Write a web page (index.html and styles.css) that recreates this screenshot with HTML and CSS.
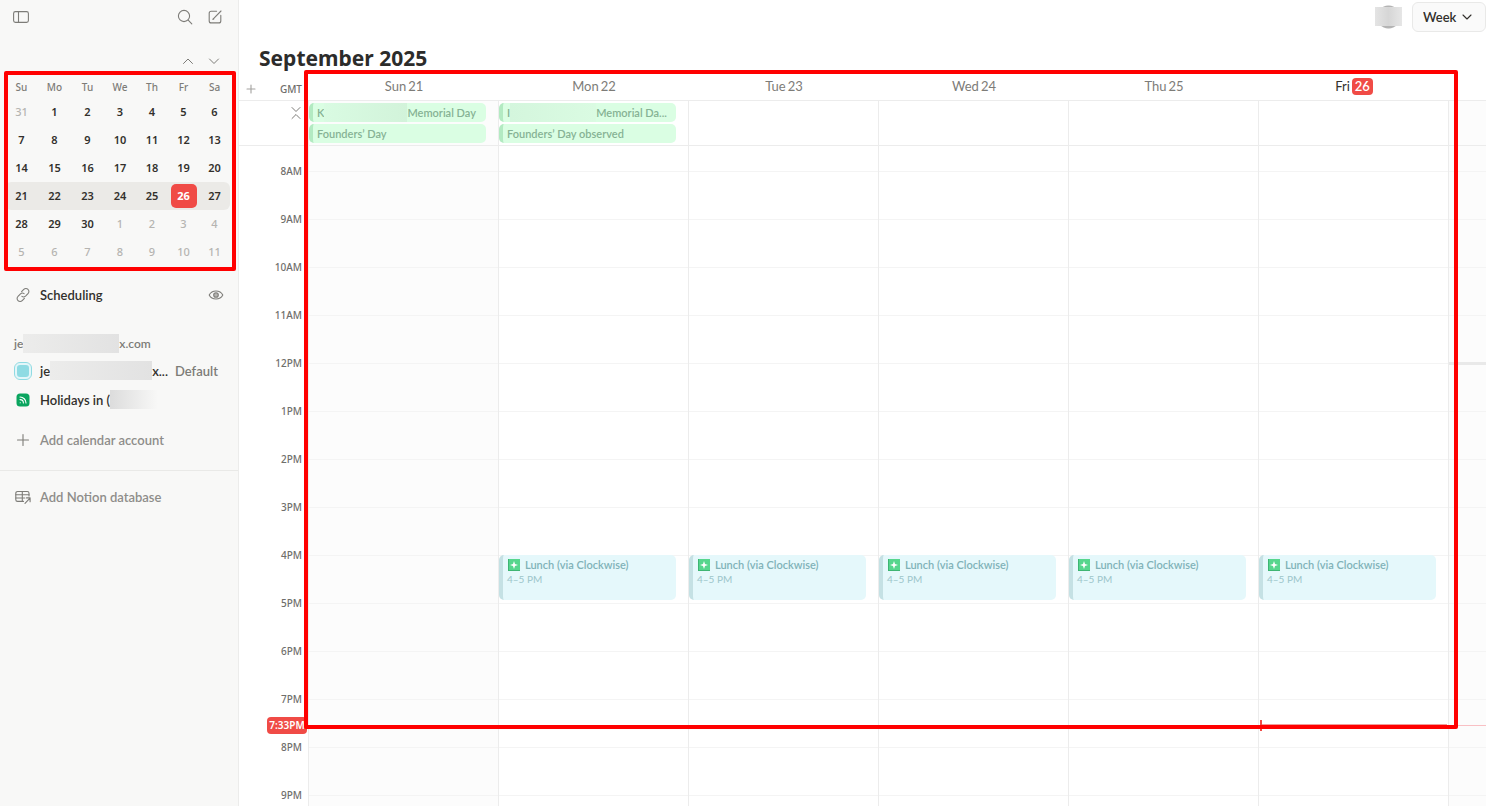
FILE: index.html
```html
<!DOCTYPE html>
<html lang="en">
<head>
    <meta charset="UTF-8">
    <meta name="viewport" content="width=device-width, initial-scale=1.0">
    <title>September 2025</title>
    <link rel="stylesheet" href="styles.css">
</head>
<body>
    <aside class="sidebar">
        <div class="sidebar-toolbar">
            <button class="icon-btn" aria-label="Toggle sidebar">
                <svg width="16" height="16" viewBox="0 0 16 16"><rect x="0.6" y="2.6" width="14.8" height="10.8" rx="1.8"/><path d="M5.5 2.6v10.8"/></svg>
            </button>
            <button class="icon-btn push" aria-label="Search">
                <svg width="16" height="16" viewBox="0 0 16 16"><circle cx="7" cy="7" r="5.6"/><path d="M11.2 11.2l3.6 3.6"/></svg>
            </button>
            <button class="icon-btn" aria-label="New event">
                <svg width="16" height="16" viewBox="0 0 16 16"><path d="M9.6 2.3H4.2a2 2 0 0 0-2 2v7.6a2 2 0 0 0 2 2h7.6a2 2 0 0 0 2-2V6.4"/><path d="M6.3 9.8L14 2"/><path d="M5.8 10.3l1-.3"/></svg>
            </button>
        </div>
        <div class="month-nav">
            <button class="icon-btn" aria-label="Previous month">
                <svg width="12" height="12" viewBox="0 0 12 12"><path d="M1.5 8.5L6 4l4.5 4.5"/></svg>
            </button>
            <button class="icon-btn" aria-label="Next month">
                <svg width="12" height="12" viewBox="0 0 12 12"><path d="M1.5 4L6 8.500 10.500 4"/></svg>
            </button>
        </div>

        <div class="mini">
            <table class="mini-calendar">
                <colgroup>
                    <col class="wide"><col class="wide"><col class="wide"><col class="mid"><col class="mid"><col><col>
                </colgroup>
                <thead>
                    <tr><th>Su</th><th>Mo</th><th>Tu</th><th>We</th><th>Th</th><th>Fr</th><th>Sa</th></tr>
                </thead>
                <tbody>
                    <tr><td class="other">31</td><td>1</td><td>2</td><td>3</td><td>4</td><td>5</td><td>6</td></tr>
                    <tr><td>7</td><td>8</td><td>9</td><td>10</td><td>11</td><td>12</td><td>13</td></tr>
                    <tr><td>14</td><td>15</td><td>16</td><td>17</td><td>18</td><td>19</td><td>20</td></tr>
                    <tr class="current"><td>21</td><td>22</td><td>23</td><td>24</td><td>25</td><td><span class="mini-today">26</span></td><td>27</td></tr>
                    <tr><td>28</td><td>29</td><td>30</td><td class="other">1</td><td class="other">2</td><td class="other">3</td><td class="other">4</td></tr>
                    <tr><td class="other">5</td><td class="other">6</td><td class="other">7</td><td class="other">8</td><td class="other">9</td><td class="other">10</td><td class="other">11</td></tr>
                </tbody>
            </table>
            <div class="frame"></div>
        </div>

        <div class="side-row scheduling">
            <svg class="side-icon" width="16" height="16" viewBox="0 0 16 16"><path d="M6.6 4.7l2.2-2.3a2.9 2.9 0 0 1 4.2 0 2.9 2.9 0 0 1 0 4.2l-2.5 2.5a2.9 2.9 0 0 1-3.6.3"/><path d="M9.4 11.3l-2.2 2.3a2.9 2.9 0 0 1-4.2 0 2.9 2.9 0 0 1 0-4.2l2.5-2.5a2.9 2.9 0 0 1 3.6-.3"/></svg>
            <span>Scheduling</span>
            <button class="icon-btn push" aria-label="Show scheduling">
                <svg width="16" height="16" viewBox="0 0 16 16"><path d="M1.2 8C4 2.600 12 2.600 14.800 8 12 13.400 4 13.400 1.200 8z"/><circle cx="8" cy="8" r="2.3" class="pupil"/></svg>
            </button>
        </div>

        <div class="account">
            <span>je</span><span class="blank blank-mail"></span><span>x.com</span>
        </div>
        <div class="side-row">
            <span class="side-icon calendar-color"></span>
            <span>je</span><span class="blank blank-name"></span><span>x...</span>
            <span class="default">Default</span>
        </div>
        <div class="side-row holidays">
            <svg class="side-icon" width="16" height="16" viewBox="0 0 16 16"><rect class="feed" x="1.5" y="1.5" width="13" height="13" rx="3.5"/><g class="feed-lines"><path d="M5 5a6 6 0 0 1 6 6"/><path d="M5 7.600a3.400 3.400 0 0 1 3.400 3.400"/><path d="M5.2 10.800h.1"/></g></svg>
            <span>Holidays in (</span><span class="blank blank-place"></span>
        </div>
        <button class="side-row add-account">
            <svg class="side-icon" width="16" height="16" viewBox="0 0 16 16"><path d="M8 2.5v11M2.5 8h11"/></svg>
            <span>Add calendar account</span>
        </button>
        <button class="side-row add-database">
            <svg class="side-icon" width="16" height="16" viewBox="0 0 16 16"><path d="M8.5 12.4H2.5a1.7 1.7 0 0 1-1.7-1.7V4.2a1.7 1.7 0 0 1 1.7-1.7h9.8A1.7 1.7 0 0 1 14 4.2V7"/><path d="M.8 5.7H14M.8 9h9M7.3 2.5v9.9"/><path d="M10 14.3l5-5.2M11.5 8.9h3.6v3.8"/></svg>
            <span>Add Notion database</span>
        </button>
    </aside>

    <main class="main">
        <header class="topbar">
            <span class="avatar"></span>
            <div class="view-picker">
                <select aria-label="View">
                    <option>Week</option>
                    <option>Day</option>
                    <option>Month</option>
                </select>
                <svg width="12" height="12" viewBox="0 0 12 12"><path d="M2 4l4 4 4-4"/></svg>
            </div>
        </header>
        <h1>September 2025</h1>

        <section class="board">
            <div class="board-row days">
                <div class="zone">
                    <button class="icon-btn" aria-label="Add time zone">
                        <svg width="10" height="10" viewBox="0 0 10 10"><path d="M5 1v8M1 5h8"/></svg>
                    </button>
                    <span>GMT</span>
                </div>
                <div class="day-name"><span>Sun</span> <span>21</span></div>
                <div class="day-name"><span>Mon</span> <span>22</span></div>
                <div class="day-name"><span>Tue</span> <span>23</span></div>
                <div class="day-name"><span>Wed</span> <span>24</span></div>
                <div class="day-name"><span>Thu</span> <span>25</span></div>
                <div class="day-name today"><span>Fri</span> <span class="today-number">26</span></div>
                <div></div>
            </div>

            <div class="board-row all-day">
                <div class="collapse">
                    <button class="icon-btn" aria-label="Collapse all-day events">
                        <svg width="12" height="14" viewBox="0 0 12 14"><path d="M2 1.5l4 4 4-4M2 12.5l4-4 4 4"/></svg>
                    </button>
                </div>
                <div class="cell weekend">
                    <div class="chip"><span>K</span><span class="blank blank-first"></span><span>Memorial Day</span></div>
                    <div class="chip">Founders’ Day</div>
                </div>
                <div class="cell">
                    <div class="chip"><span>I</span><span class="blank blank-second"></span><span>Memorial Da...</span></div>
                    <div class="chip">Founders’ Day observed</div>
                </div>
                <div class="cell"></div>
                <div class="cell"></div>
                <div class="cell"></div>
                <div class="cell"></div>
                <div class="cell weekend"></div>
            </div>

            <div class="board-row hours">
                <div class="times">
                    <span>8AM</span>
                    <span>9AM</span>
                    <span>10AM</span>
                    <span>11AM</span>
                    <span>12PM</span>
                    <span>1PM</span>
                    <span>2PM</span>
                    <span>3PM</span>
                    <span>4PM</span>
                    <span>5PM</span>
                    <span>6PM</span>
                    <span>7PM</span>
                    <span>8PM</span>
                    <span>9PM</span>
                </div>
                <div class="column weekend"></div>
                <div class="column">
                    <div class="event">
                        <div class="event-title"><svg width="12" height="12" viewBox="0 0 12 12"><rect class="tile" width="12" height="12"/><path class="tile-edge" d="M.5 0v11.5H12"/><path class="spark" d="M6 2L7 5 10 6 7 7 6 10 5 7 2 6l3-1z"/></svg>Lunch (via Clockwise)</div>
                        <div class="event-time">4–5 PM</div>
                    </div>
                </div>
                <div class="column">
                    <div class="event">
                        <div class="event-title"><svg width="12" height="12" viewBox="0 0 12 12"><rect class="tile" width="12" height="12"/><path class="tile-edge" d="M.5 0v11.5H12"/><path class="spark" d="M6 2L7 5 10 6 7 7 6 10 5 7 2 6l3-1z"/></svg>Lunch (via Clockwise)</div>
                        <div class="event-time">4–5 PM</div>
                    </div>
                </div>
                <div class="column">
                    <div class="event">
                        <div class="event-title"><svg width="12" height="12" viewBox="0 0 12 12"><rect class="tile" width="12" height="12"/><path class="tile-edge" d="M.5 0v11.5H12"/><path class="spark" d="M6 2L7 5 10 6 7 7 6 10 5 7 2 6l3-1z"/></svg>Lunch (via Clockwise)</div>
                        <div class="event-time">4–5 PM</div>
                    </div>
                </div>
                <div class="column">
                    <div class="event">
                        <div class="event-title"><svg width="12" height="12" viewBox="0 0 12 12"><rect class="tile" width="12" height="12"/><path class="tile-edge" d="M.5 0v11.5H12"/><path class="spark" d="M6 2L7 5 10 6 7 7 6 10 5 7 2 6l3-1z"/></svg>Lunch (via Clockwise)</div>
                        <div class="event-time">4–5 PM</div>
                    </div>
                </div>
                <div class="column">
                    <div class="event">
                        <div class="event-title"><svg width="12" height="12" viewBox="0 0 12 12"><rect class="tile" width="12" height="12"/><path class="tile-edge" d="M.5 0v11.5H12"/><path class="spark" d="M6 2L7 5 10 6 7 7 6 10 5 7 2 6l3-1z"/></svg>Lunch (via Clockwise)</div>
                        <div class="event-time">4–5 PM</div>
                    </div>
                    <div class="now-today"></div>
                </div>
                <div class="column weekend">
                    <div class="noon"></div>
                </div>
                <div class="now-line"></div>
                <div class="now-label">7:33PM</div>
            </div>
            <div class="frame"></div>
        </section>
    </main>
</body>
</html>
```
FILE: styles.css
```css
* {
    box-sizing: border-box;
}
body {
    margin: 0;
    height: 100vh;
    display: flex;
    overflow: hidden;
    font-family: Lato, "Noto Sans", sans-serif;
    font-size: 13px;
    color: #32302c;
    background: #fff;
}
button {
    font: inherit;
    color: inherit;
    background: none;
    border: none;
    padding: 0;
    cursor: pointer;
}
svg {
    display: block;
    flex: none;
    fill: none;
    stroke: #7d7c78;
    stroke-width: 1.1;
    stroke-linecap: round;
    stroke-linejoin: round;
}
.icon-btn {
    display: flex;
}
.push {
    margin-left: auto;
}
.frame {
    position: absolute;
    border: 4px solid #ff0000;
    border-radius: 2px;
    pointer-events: none;
}
.blank {
    flex: none;
    height: 19px;
    background: linear-gradient(90deg, #ececeb, #e2e2e2);
}

/* sidebar */
.sidebar {
    flex: none;
    width: 239px;
    background: #f8f8f7;
    border-right: 1px solid #ececeb;
}
.sidebar-toolbar {
    display: flex;
    align-items: center;
    gap: 14px;
    height: 34px;
    padding: 0 15px 0 13px;
}
.month-nav {
    display: flex;
    justify-content: flex-end;
    align-items: flex-end;
    gap: 14px;
    height: 33px;
    padding-right: 18px;
}
.month-nav svg {
    stroke-width: 1;
}
.mini {
    position: relative;
    padding: 9px 8px 0 5px;
}
.mini .frame {
    top: 4px;
    right: 2px;
    bottom: -5px;
    left: 4px;
}
.mini-calendar {
    width: 100%;
    table-layout: fixed;
    border-collapse: collapse;
    text-align: center;
    font-family: "Noto Sans", sans-serif;
    font-size: 11px;
    line-height: 16px;
}
.mini-calendar .wide {
    width: 33px;
}
.mini-calendar .mid {
    width: 32px;
}
.mini-calendar th {
    height: 22px;
    padding: 0;
    font-size: 10px;
    font-weight: 500;
    color: #7d7c78;
}
.mini-calendar td {
    height: 28px;
    padding: 0;
    font-weight: 600;
}
.mini-calendar .other {
    font-weight: 500;
    color: #b5b4b1;
}
.current td {
    background: #ebeae7;
}
.current td:first-child {
    border-radius: 6px 0 0 6px;
}
.current td:last-child {
    border-radius: 0 6px 6px 0;
}
.mini-today {
    display: block;
    width: 26px;
    margin: 0 auto;
    border-radius: 5px;
    background: #f04b46;
    color: #fff;
    font-weight: 700;
    line-height: 24px;
}
.side-row {
    display: flex;
    align-items: center;
    width: 100%;
    height: 29px;
    padding: 0 14px 0 15px;
    font-weight: 600;
}
.side-icon {
    margin-right: 9px;
}
.scheduling {
    margin-top: 14px;
}
.pupil {
    fill: #b5b4b1;
}
.account {
    display: flex;
    align-items: center;
    height: 26px;
    margin-top: 21px;
    padding-left: 14px;
    font-size: 12px;
    font-weight: 600;
    color: #7d7c78;
}
.blank-mail {
    width: 96px;
}
.blank-name {
    width: 102px;
}
.blank-place {
    width: 48px;
    background: linear-gradient(90deg, #dcdcdc, #f8f8f7);
}
.calendar-color {
    width: 16px;
    height: 16px;
    border: 2px solid #e3f6f9;
    border-radius: 5px;
    outline: 1px solid #8fdbe3;
    background: #8fdbe3;
}
.default {
    margin-left: 7px;
    color: #7d7c78;
}
.feed {
    fill: #0aa55f;
    stroke: none;
}
.feed-lines {
    stroke: #fff;
}
.add-account,
.add-database {
    color: #8e8d8a;
}
.add-account {
    margin-top: 11px;
}
.add-database {
    height: 53px;
    margin-top: 16px;
    border-top: 1px solid #e9e9e7;
}

/* calendar */
.main {
    flex: 1;
    min-width: 0;
    display: flex;
    flex-direction: column;
}
.topbar {
    display: flex;
    justify-content: flex-end;
    align-items: center;
    gap: 10px;
    height: 34px;
}
.avatar {
    width: 27px;
    height: 24px;
    background:
        linear-gradient(90deg, #e4e4e4, #d6d6d6 50%, #e6e6e6) 0 2px / 100% 19px no-repeat,
        radial-gradient(circle, #b4b4b4 11px, transparent 12px);
}
.view-picker {
    position: relative;
}
.view-picker select {
    appearance: none;
    display: block;
    width: 74px;
    height: 30px;
    padding: 0 10px;
    border: 1px solid #e9e9e8;
    border-radius: 6px;
    background: #fafafa;
    color: inherit;
    font: inherit;
    font-weight: 600;
}
.view-picker svg {
    position: absolute;
    top: 9px;
    right: 13px;
    stroke: #32302c;
    pointer-events: none;
}
h1 {
    margin: 0;
    padding-left: 20px;
    height: 38px;
    font-family: "Noto Sans", sans-serif;
    font-size: 21px;
    line-height: 48px;
    font-weight: 700;
    color: #2c2c2b;
}
.board {
    position: relative;
    flex: 1;
    min-height: 0;
    display: flex;
    flex-direction: column;
}
.board > .frame {
    top: -2px;
    right: 28px;
    bottom: 77px;
    left: 65px;
}
.board-row {
    display: grid;
    grid-template-columns: 69px repeat(6, 1fr) 38px;
}
.days {
    height: 29px;
    border-bottom: 1px solid #ececec;
}
.zone {
    display: flex;
    justify-content: space-between;
    align-items: center;
    padding: 5px 6px 0 7px;
    font-family: "Noto Sans", sans-serif;
    font-size: 10px;
    font-weight: 500;
    color: #6f6e6b;
}
.zone svg {
    stroke: #a3a29f;
}
.day-name {
    display: flex;
    justify-content: center;
    align-items: center;
    gap: 2px;
    padding-left: 2px;
    color: #7d7c78;
}
.today {
    color: #32302c;
}
.today-number {
    padding: 0 3px;
    border-radius: 4px;
    background: #f04b46;
    color: #fff;
    font-weight: 600;
    line-height: 17px;
}
.all-day {
    height: 45px;
    border-bottom: 1px solid #ececec;
}
.collapse {
    display: flex;
    justify-content: flex-end;
    padding: 5px 6px 0 0;
}
.collapse svg {
    stroke-width: 1;
}
.cell {
    display: flex;
    flex-direction: column;
    gap: 2px;
    min-width: 0;
    padding: 2px 12px 0 0;
    border-left: 1px solid #ececec;
}
.weekend {
    background-color: #fcfcfc;
}
.chip {
    display: flex;
    align-items: center;
    height: 19px;
    padding-left: 4px;
    border-left: 4px solid #b3eac2;
    border-radius: 5px;
    background: #dafee3;
    color: #86b294;
    font-size: 11px;
    font-weight: 600;
    white-space: nowrap;
    overflow: hidden;
}
.chip .blank {
    background: linear-gradient(90deg, #d9fbe2, #d2f3da);
}
.blank-first {
    width: 83px;
}
.chip .blank-second {
    width: 86px;
    background: linear-gradient(90deg, #d4f6dd, #dafbe2);
}
.hours {
    position: relative;
    flex: 1;
    min-height: 0;
    overflow: hidden;
}
.times {
    display: grid;
    grid-auto-rows: 48px;
    align-items: center;
    justify-items: end;
    padding: 1px 6px 0 0;
    font-family: "Noto Sans", sans-serif;
    font-size: 10px;
    font-weight: 500;
    color: #6f6e6b;
}
.column {
    display: grid;
    grid-template-rows: 25px repeat(14, 48px);
    min-width: 0;
    border-left: 1px solid #ececec;
    background-image: linear-gradient(#f4f4f4 1px, transparent 1px);
    background-size: 100% 48px;
    background-position: 0 25px;
}
.event {
    grid-row: 10;
    margin: 0 12px 3px 0;
    padding: 2px 0 0 4px;
    border-left: 4px solid #c5e1e4;
    border-radius: 5px;
    background: #e5f8fb;
    color: #80b2b8;
}
.event-title {
    display: flex;
    align-items: center;
    gap: 5px;
    padding-left: 1px;
    font-size: 11px;
    line-height: 16px;
    font-weight: 600;
    white-space: nowrap;
}
.event-time {
    font-size: 10px;
    line-height: 12px;
    color: #9cc5ca;
}
.tile {
    fill: #57d68d;
    stroke: none;
}
.tile-edge {
    stroke: #3eb573;
    stroke-linecap: butt;
}
.spark {
    fill: #fff;
    stroke: none;
}
.noon {
    grid-row: 6;
    height: 3px;
    margin-top: -1px;
    background: #e9e9e9;
}
.now-line {
    position: absolute;
    top: 579px;
    right: 0;
    left: 69px;
    height: 1px;
    background: #f9c0c4;
}
.now-label {
    position: absolute;
    top: 571px;
    left: 28px;
    width: 40px;
    border-radius: 4px;
    background: #f04b46;
    color: #fff;
    font-family: "Noto Sans", sans-serif;
    font-size: 10px;
    font-weight: 600;
    line-height: 17px;
    text-align: center;
}
.now-today {
    grid-row: 13;
    height: 11px;
    margin: 21px 1px 0;
    border-left: 2px solid #f04b46;
    background: linear-gradient(#f29b98, #f29b98) 0 4px / 100% 2px no-repeat;
}
```
